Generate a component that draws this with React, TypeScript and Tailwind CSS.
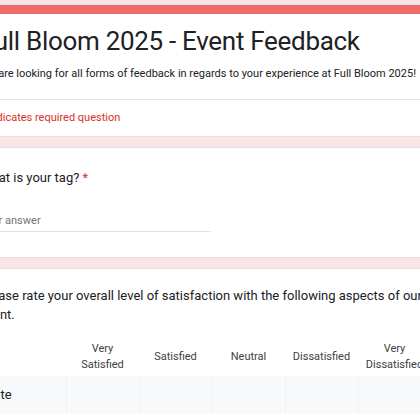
import React from 'react';

const columns = [
  ['Very', 'Satisfied'],
  ['Satisfied'],
  ['Neutral'],
  ['Dissatisfied'],
  ['Very', 'Dissatisfied'],
];

function Card({ children, className = '' }: { children: React.ReactNode; className?: string }) {
  return (
    <div className={`rounded-lg border border-[#e6dfe0] bg-white ${className}`}>{children}</div>
  );
}

export default function App() {
  return (
    <div className="h-[420px] w-[420px] overflow-hidden bg-[#fbe4e6] font-['Roboto',sans-serif] text-[#202124]">
      <div className="ml-[-45px] flex w-[640px] flex-col gap-[10px] pt-[4px]">
        {/* header */}
        <Card className="overflow-hidden">
          <div className="h-[9px] bg-[#ef6b6b]" />
          <div className="px-6 pt-[9px]">
            <h1 className="text-[26px] leading-[36px] tracking-[-0.3px]">
              Full Bloom 2025 - Event Feedback
            </h1>
            <p className="mt-[6px] pb-[16px] text-[11px] leading-[18px]">
              We are looking for all forms of feedback in regards to your experience at Full Bloom 2025!
            </p>
          </div>
          <div className="border-t border-[#e6e6e6] px-6 py-[10px] text-[11px] leading-[16px] text-[#d93025]">
            * Indicates required question
          </div>
        </Card>

        {/* tag question */}
        <Card className="px-6 pt-[20px] pb-[25px]">
          <div className="text-[13px] leading-[20px]">
            What is your tag? <span className="text-[#d93025]">*</span>
          </div>
          <div className="mt-[25px] w-[231px] border-b border-[#e3e3e3] pb-[2px] text-[11px] leading-[16px] text-[#70757a]">
            Your answer
          </div>
        </Card>

        {/* grid question */}
        <Card className="px-6 pt-[17px] pb-6">
          <div className="w-[455px] text-[13px] leading-[19px]">
            Please rate your overall level of satisfaction with the following aspects of our event.
          </div>
          <div className="mt-[17px]">
            <div className="grid grid-cols-[86px_repeat(5,73px)] items-center text-[11px] leading-[16px] text-[#3c4043]">
              <div />
              {columns.map((c) => (
                <div key={c.join(' ')} className="text-center">
                  {c.map((l) => (
                    <div key={l}>{l}</div>
                  ))}
                </div>
              ))}
            </div>
            <div className="mt-[3px] grid h-[38px] grid-cols-[86px_repeat(5,73px)] bg-[#f8f9fa] text-[13px]">
              <div className="flex items-center pl-[5px]">Date</div>
              {columns.map((c) => (
                <div key={c.join(' ')} className="border-l border-[#f1f2f3]" />
              ))}
            </div>
          </div>
        </Card>
      </div>
    </div>
  );
}
